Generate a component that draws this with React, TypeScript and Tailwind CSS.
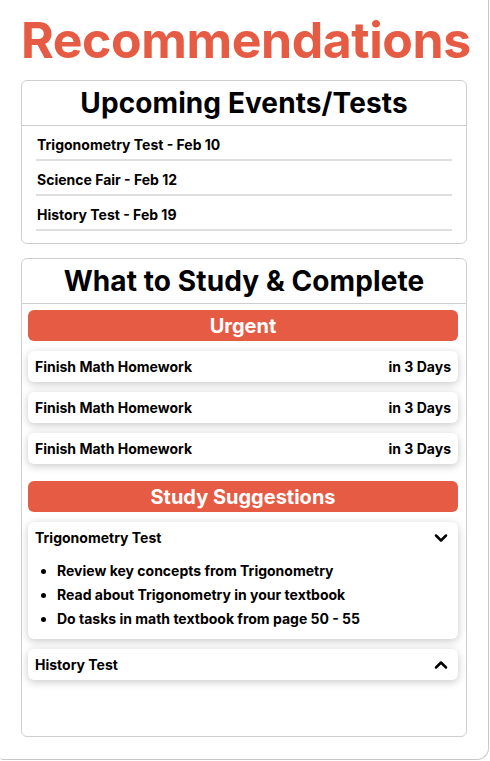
import { ChevronDown, ChevronUp } from "lucide-react";

const events = [
  "Trigonometry Test - Feb 10",
  "Science Fair - Feb 12",
  "History Test - Feb 19",
];

const urgentTasks = [
  { title: "Finish Math Homework", due: "in 3 Days" },
  { title: "Finish Math Homework", due: "in 3 Days" },
  { title: "Finish Math Homework", due: "in 3 Days" },
];

const trigTips = [
  "Review key concepts from Trigonometry",
  "Read about Trigonometry in your textbook",
  "Do tasks in math textbook from page 50 - 55",
];

const SectionBar = ({ children }: { children: string }) => (
  <div className="flex h-[31px] items-center justify-center rounded-md bg-[#e65b43] text-[20px] font-bold leading-none text-white">
    {children}
  </div>
);

const App = () => {
  return (
    <div className="h-[761px] w-[490px] bg-white font-['Inter','Noto_Sans',sans-serif] text-black">
      <div className="flex h-[760px] w-[489px] flex-col rounded-br-xl rounded-bl-[3px] border-r border-b border-[#c9c9c9] px-[21px] pt-[15px]">
        <h1 className="text-center text-[50px] font-bold leading-[50px] tracking-[-0.45px] text-[#e65b43]">
          Recommendations
        </h1>

        <div className="mt-[15px] rounded-md border border-[#cfcfcf] pb-[12px]">
          <div className="flex h-[45px] items-center justify-center border-b border-[#cfcfcf] text-[28px] font-bold leading-none tracking-[0.1px]">
            Upcoming Events/Tests
          </div>
          <div className="px-[14px]">
            {events.map((e) => (
              <div
                key={e}
                className="border-b-2 border-[#dedede] pt-[9px] pb-[4px] pl-[1px] text-[14px] font-bold leading-[20px]"
              >
                {e}
              </div>
            ))}
          </div>
        </div>

        <div className="mt-[14px] flex h-[479px] flex-col rounded-md border border-[#cfcfcf]">
          <div className="flex h-[45px] items-center justify-center border-b border-[#cfcfcf] text-[28px] font-bold leading-none tracking-[0.1px]">
            What to Study &amp; Complete
          </div>
          <div className="flex flex-col pt-[6px] pr-[8px] pl-[6px]">
            <SectionBar>Urgent</SectionBar>
            <div className="mt-[10px] flex flex-col gap-[10px]">
              {urgentTasks.map((t, i) => (
                <div
                  key={i}
                  className="flex h-[31px] items-center justify-between rounded-md bg-white px-[7px] text-[14px] font-bold shadow-[0_2px_8px_rgba(0,0,0,0.22)]"
                >
                  <span>{t.title}</span>
                  <span>{t.due}</span>
                </div>
              ))}
            </div>

            <div className="mt-[17px]">
              <SectionBar>Study Suggestions</SectionBar>
            </div>

            <div className="mt-[10px] flex flex-col gap-[10px]">
              <div className="rounded-md bg-white pb-[8px] shadow-[0_2px_8px_rgba(0,0,0,0.22)]">
                <div className="flex h-[31px] items-center justify-between px-[7px] text-[14px] font-bold">
                  <span>Trigonometry Test</span>
                  <ChevronDown size={20} strokeWidth={3} />
                </div>
                <ul className="mt-[6px] list-disc pl-[29px] text-[14px] font-bold leading-[24px]">
                  {trigTips.map((tip) => (
                    <li key={tip}>{tip}</li>
                  ))}
                </ul>
              </div>
              <div className="flex h-[31px] items-center justify-between rounded-md bg-white px-[7px] text-[14px] font-bold shadow-[0_2px_8px_rgba(0,0,0,0.22)]">
                <span>History Test</span>
                <ChevronUp size={20} strokeWidth={3} />
              </div>
            </div>
          </div>
        </div>
      </div>
    </div>
  );
};

export default App;
